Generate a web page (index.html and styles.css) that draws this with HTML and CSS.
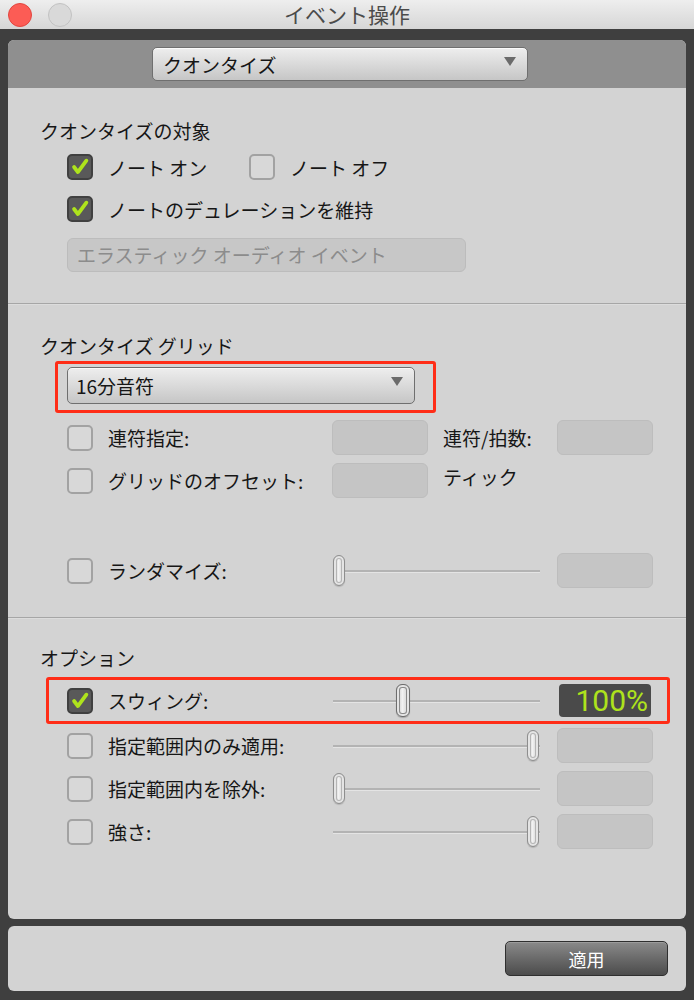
FILE: index.html
```html
<!DOCTYPE html>
<html lang="ja">
<head>
    <meta charset="UTF-8">
    <title>イベント操作</title>
    <link rel="stylesheet" href="styles.css">
</head>
<body>
    <div class="titlebar">
        <div class="lights">
            <span class="light light-close"></span>
            <span class="light light-min"></span>
        </div>
        <div class="title">イベント操作</div>
        <div></div>
    </div>

    <div class="window">
        <div class="panel panel-main">
            <div class="panel-head">
                <div class="popup popup-mode">クオンタイズ<span class="arrow"></span></div>
            </div>

            <!-- クオンタイズの対象 -->
            <div class="section section-target">
                <h2>クオンタイズの対象</h2>
                <div class="row">
                    <span class="check on"><svg viewBox="0 0 26 26"><path d="M6 13 L10.5 19 L20.5 5.5"/></svg></span>
                    <span class="label label-on">ノート オン</span>
                    <span class="check"></span>
                    <span class="label">ノート オフ</span>
                </div>
                <div class="row">
                    <span class="check on"><svg viewBox="0 0 26 26"><path d="M6 13 L10.5 19 L20.5 5.5"/></svg></span>
                    <span class="label">ノートのデュレーションを維持</span>
                </div>
                <div class="disabled-btn">エラスティック オーディオ イベント</div>
            </div>

            <div class="separator"></div>

            <!-- クオンタイズ グリッド -->
            <div class="section section-grid">
                <h2>クオンタイズ グリッド</h2>
                <div class="highlight highlight-grid">
                    <div class="popup popup-grid">16分音符<span class="arrow"></span></div>
                </div>
                <div class="row">
                    <span class="check"></span>
                    <span class="label label-col">連符指定:</span>
                    <div class="mid">
                        <span class="field"></span>
                        <span class="label label-unit">連符/拍数:</span>
                    </div>
                    <span class="field"></span>
                </div>
                <div class="row">
                    <span class="check"></span>
                    <span class="label label-col">グリッドのオフセット:</span>
                    <div class="mid">
                        <span class="field"></span>
                        <span class="label label-unit tick">ティック</span>
                    </div>
                </div>
                <div class="row row-random">
                    <span class="check"></span>
                    <span class="label label-col">ランダマイズ:</span>
                    <div class="mid">
                        <div class="slider"><span class="thumb" style="left: 0px"></span></div>
                    </div>
                    <span class="field"></span>
                </div>
            </div>

            <div class="separator"></div>

            <!-- オプション -->
            <div class="section section-options">
                <h2>オプション</h2>
                <div class="highlight highlight-swing">
                    <div class="row row-swing">
                        <span class="check on"><svg viewBox="0 0 26 26"><path d="M6 13 L10.5 19 L20.5 5.5"/></svg></span>
                        <span class="label label-col">スウィング:</span>
                        <div class="mid">
                            <div class="slider"><span class="thumb thumb-big" style="left: 63px"></span></div>
                        </div>
                        <span class="value">100%</span>
                    </div>
                </div>
                <div class="row row-opt">
                    <span class="check"></span>
                    <span class="label label-col">指定範囲内のみ適用:</span>
                    <div class="mid">
                        <div class="slider"><span class="thumb" style="left: 194px"></span></div>
                    </div>
                    <span class="field"></span>
                </div>
                <div class="row row-opt">
                    <span class="check"></span>
                    <span class="label label-col">指定範囲内を除外:</span>
                    <div class="mid">
                        <div class="slider"><span class="thumb" style="left: 0px"></span></div>
                    </div>
                    <span class="field"></span>
                </div>
                <div class="row row-opt">
                    <span class="check"></span>
                    <span class="label label-col">強さ:</span>
                    <div class="mid">
                        <div class="slider"><span class="thumb" style="left: 194px"></span></div>
                    </div>
                    <span class="field"></span>
                </div>
            </div>
        </div>

        <div class="panel panel-foot">
            <button class="apply">適用</button>
        </div>
    </div>
</body>
</html>
```

FILE: styles.css
```css
:root {
    --panel: #d3d3d3;
    --dark: #3f3f3f;
    --lime: #aee31c;
    --red: #ff2d17;
}

body {
    margin: 0;
    height: 1000px;
    background: var(--dark);
    font-family: "Noto Sans CJK JP", sans-serif;
    color: #161616;
    overflow: hidden;
}

/* タイトルバー */
.titlebar {
    height: 29px;
    display: grid;
    grid-template-columns: 1fr auto 1fr;
    align-items: center;
    background: linear-gradient(#eeeeee, #d6d6d6);
}

.lights {
    display: flex;
    gap: 16px;
    padding-left: 8px;
}

.light {
    width: 24px;
    height: 24px;
    border-radius: 50%;
    box-sizing: border-box;
}

.light-close {
    background: #fc5c55;
    border: 1px solid #e2463f;
}

.light-min {
    background: #d9d9d9;
    border: 1px solid #c2c2c2;
}

.title {
    font-size: 21px;
    line-height: 29px;
    color: #4b4b4b;
}

/* ウィンドウ */
.window {
    padding: 11px 8px 0;
}

.panel {
    background: var(--panel);
    border-radius: 6px;
    overflow: hidden;
}

.panel-main {
    height: 879px;
}

.panel-head {
    height: 48px;
    background: #8f8f8f;
    display: flex;
    align-items: center;
    padding-left: 144px;
}

.popup {
    box-sizing: border-box;
    display: flex;
    justify-content: space-between;
    align-items: center;
    border: 1px solid #6f6f6f;
    border-radius: 5px;
    background: linear-gradient(#eeeeee, #c6c6c6);
    box-shadow: inset 0 1px 0 #fafafa;
    font-size: 19px;
    padding: 0 11px 0 10px;
}

.popup-mode {
    width: 376px;
    height: 34px;
}

.popup-grid {
    width: 348px;
    height: 37px;
    padding-left: 8px;
}

.arrow {
    align-self: flex-start;
    margin-top: 9px;
    width: 0;
    height: 0;
    border-left: 6px solid transparent;
    border-right: 6px solid transparent;
    border-top: 9px solid #6b6b6b;
}

/* セクション */
.section h2 {
    margin: 0 0 2px;
    padding-left: 32px;
    font-size: 19px;
    font-weight: normal;
    line-height: 26px;
}

.section-target {
    padding: 30px 0 31px;
}

.section-grid {
    padding: 28px 0 25px;
}

.section-options {
    padding-top: 26px;
}

.separator {
    height: 1px;
    background: #a6a6a6;
    border-bottom: 1px solid #dcdcdc;
}

.row {
    display: flex;
    align-items: center;
    height: 42px;
    padding-left: 59px;
}

.section-grid .row {
    height: 43px;
}

.section-grid .highlight + .row {
    margin-top: 3px;
}

.row-random {
    margin-top: 47px;
}

.row-opt {
    height: 43px;
}

.check {
    flex: none;
    box-sizing: border-box;
    width: 26px;
    height: 26px;
    border: 2px solid #a2a2a2;
    border-radius: 5px;
    background: #d8d8d8;
}

.check.on {
    background: #595959;
    border-color: #404040;
}

.check svg {
    display: block;
    width: 22px;
    height: 22px;
}

.check svg path {
    fill: none;
    stroke: var(--lime);
    stroke-width: 4.5;
    stroke-linecap: round;
    stroke-linejoin: round;
}

.label {
    font-size: 19px;
    margin-left: 15px;
    white-space: nowrap;
}

.label-on {
    width: 141px;
}

.label-col {
    width: 224px;
    flex: none;
}

.mid {
    width: 225px;
    flex: none;
    display: flex;
    align-items: center;
}

.label-unit {
    width: 114px;
}

.tick {
    padding-bottom: 8px;
}

.field {
    flex: none;
    box-sizing: border-box;
    width: 96px;
    height: 35px;
    background: #c5c5c5;
    border: 1px solid #bdbdbd;
    border-radius: 6px;
}

.disabled-btn {
    box-sizing: border-box;
    width: 399px;
    height: 34px;
    margin: 8px 0 0 59px;
    padding-left: 9px;
    background: #c7c7c7;
    border: 1px solid #bcbcbc;
    border-radius: 6px;
    color: #8c8c8c;
    font-size: 19px;
    line-height: 31px;
}

/* 赤い枠 */
.highlight {
    border: 3px solid var(--red);
    border-radius: 3px;
    width: fit-content;
}

.highlight-grid {
    margin-left: 47px;
    padding: 3px 18px 6px 9px;
}

.highlight-swing {
    margin: 6px 0 0 38px;
    width: 618px;
}

.row-swing {
    height: 41px;
    padding-left: 18px;
}

/* スライダー */
.slider {
    position: relative;
    width: 207px;
    height: 2px;
    margin-left: 1px;
    background: #b3b3b3;
    box-shadow: 0 1px 0 #e4e4e4;
}

.thumb {
    position: absolute;
    top: -15px;
    box-sizing: border-box;
    width: 12px;
    height: 31px;
    border: 1px solid #8e8e8e;
    border-radius: 6px;
    background: linear-gradient(to right, #c4c4c4, #f2f2f2 45%, #cbcbcb);
    box-shadow: inset 0 0 0 2px #e4e4e4, inset 0 0 0 3px #b4b4b4, 0 1px 1px rgba(0,0,0,0.15);
}

.thumb-big {
    top: -16px;
    width: 14px;
    height: 33px;
    border-color: #6e6e6e;
    box-shadow: inset 0 0 0 2px #e4e4e4, inset 0 0 0 3px #8a8a8a, 0 1px 1px rgba(0,0,0,0.2);
}

.value {
    flex: none;
    box-sizing: border-box;
    width: 92px;
    height: 33px;
    margin-left: 2px;
    padding-right: 3px;
    background: #4a4a4a;
    border-radius: 4px;
    color: var(--lime);
    font-family: Roboto, "Liberation Sans", sans-serif;
    font-size: 30px;
    line-height: 33px;
    text-align: right;
}

/* フッター */
.panel-foot {
    height: 65px;
    margin-top: 7px;
    display: flex;
    justify-content: flex-end;
    padding: 15px 18px 0 0;
    box-sizing: border-box;
}

.apply {
    width: 163px;
    height: 35px;
    border: 1px solid #2f2f2f;
    border-radius: 5px;
    background: linear-gradient(#8a8a8a, #6a6a6a 50%, #4c4c4c);
    box-shadow: inset 0 1px 0 #9c9c9c;
    color: #ffffff;
    font-family: inherit;
    font-size: 18px;
    padding: 0;
}
```
